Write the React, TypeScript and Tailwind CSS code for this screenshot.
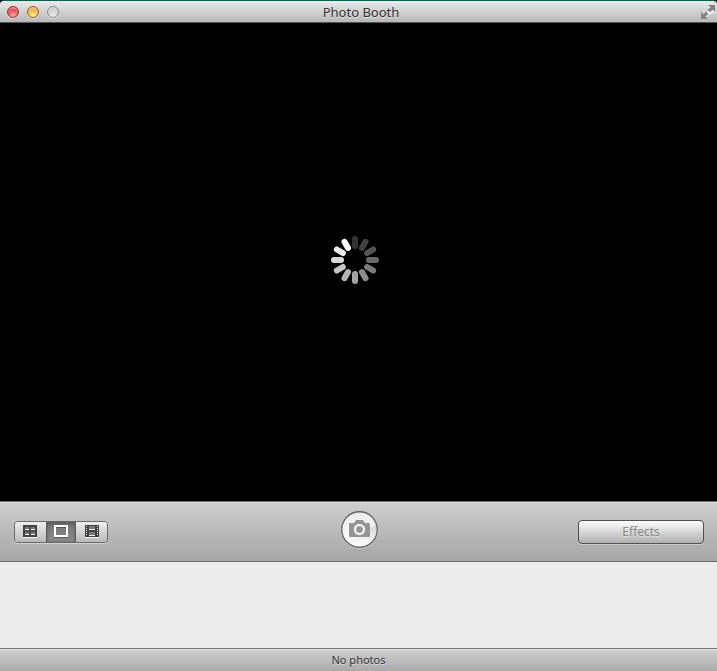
import { useState } from "react";

const spokes = [
  "#333333", "#424242", "#535353", "#686868", "#7a7a7a", "#8c8c8c",
  "#a3a3a3", "#b4b4b4", "#c6c6c6", "#d9d9d9", "#ececec", "#ffffff",
];

function Spinner() {
  return (
    <svg width="48" height="48" viewBox="-24 -24 48 48" role="img" aria-label="Loading">
      {spokes.map((color, i) => (
        <rect key={color} x="-3" y="-24" width="6" height="13" rx="3" fill={color} transform={`rotate(${i * 30})`} />
      ))}
    </svg>
  );
}

function GridIcon() {
  return (
    <svg width="14" height="13" viewBox="0 0 14 13" shapeRendering="crispEdges" aria-hidden="true">
      <path d="M0 12h14v1H0z" fill="#f4f4f4" />
      <path d="M0 0h14v12H0z" fill="#404040" />
      <path d="M2 2h4v3H2zM8 2h4v3H8zM2 7h4v3H2zM8 7h4v3H8z" fill="#777777" />
      <path d="M2 4h4v1H2zM8 4h4v1H8zM2 9h4v1H2zM8 9h4v1H8z" fill="#f0f0f0" />
      <path d="M6 2h2v8H6zM2 5h10v2H2z" fill="#4d4d4d" />
    </svg>
  );
}

function FrameIcon() {
  return (
    <svg width="14" height="13" viewBox="0 0 14 13" shapeRendering="crispEdges" aria-hidden="true">
      <path d="M0 12h14v1H0z" fill="#5c5c5c" />
      <path fillRule="evenodd" d="M0 0h14v12H0zM2 2v8h10V2z" fill="#ffffff" />
      <path d="M2 2h10v1H2z" fill="#555555" />
    </svg>
  );
}

function FilmIcon() {
  return (
    <svg width="14" height="13" viewBox="0 0 14 13" shapeRendering="crispEdges" aria-hidden="true">
      <path d="M0 12h14v1H0z" fill="#f4f4f4" />
      <path d="M0 0h14v12H0z" fill="#404040" />
      <path d="M4 1h6v4H4zM4 7h6v4H4z" fill="#777777" />
      <path d="M4 4h6v1H4zM4 10h6v1H4zM1 1h1v1H1zM1 3h1v1H1zM1 5h1v1H1zM1 7h1v1H1zM1 9h1v1H1zM12 1h1v1h-1zM12 3h1v1h-1zM12 5h1v1h-1zM12 7h1v1h-1zM12 9h1v1h-1z" fill="#f0f0f0" />
    </svg>
  );
}

function CameraIcon() {
  return (
    <svg width="37" height="37" viewBox="0 0 37 37" aria-hidden="true">
      <defs>
        <linearGradient id="face" x1="0" y1="0" x2="0" y2="1">
          <stop offset="0" stopColor="#d6d6d6" />
          <stop offset="0.5" stopColor="#dedede" />
          <stop offset="1" stopColor="#ffffff" />
        </linearGradient>
        <linearGradient id="gloss" x1="0" y1="0" x2="0" y2="1">
          <stop offset="0" stopColor="#ffffff" stopOpacity="0.5" />
          <stop offset="1" stopColor="#ffffff" stopOpacity="0.85" />
        </linearGradient>
      </defs>
      <circle cx="18.5" cy="18.5" r="17.75" fill="url(#face)" />
      <path d="M35 13A17.300 17.300 0 1 0 7 31Q14 28 21 23T35 13Z" fill="url(#gloss)" />
      <path d="M9 12h4l2-3h7l2 3h4q1 0 1 1v12q0 1-1 1H9q-1 0-1-1V13q0-1 1-1Z" fill="#959595" />
      <path d="M31 14v11q0 1-1 1H16q10-4 13-9Z" fill="#858585" opacity="0" />
      <circle cx="18.500" cy="18.500" r="4.500" fill="#919191" stroke="#eeeeee" strokeWidth="2.500" />
      <circle cx="18.500" cy="18.500" r="17.750" fill="none" stroke="#666666" strokeWidth="1.300" />
    </svg>
  );
}

function FullScreenIcon() {
  return (
    <svg width="14" height="14" viewBox="0 0 14 14" aria-hidden="true">
      <path d="M7 1h7v7l-2-2-3 3-3-3 3-3zM0 7l2 2 3-3 3 3-3 3 2 2H0z" transform="translate(0 1)" fill="#f5f5f5" />
      <path d="M7 0h7v7l-2.300-2.300L9 7.300 6.700 5l2.600-2.700zM0 7l2.300 2.300L5 6.700 7.300 9l-2.600 2.700L7 14H0z" fill="#858585" />
    </svg>
  );
}

const modes = [
  { label: "Take four quick pictures", Icon: GridIcon },
  { label: "Take a still picture", Icon: FrameIcon },
  { label: "Record a movie clip", Icon: FilmIcon },
];

const lights = [
  { label: "Close", style: "border-[#8d3835] bg-[radial-gradient(circle_at_50%_85%,#ffb0ae,#ee555a_50%,#c92d37)]" },
  { label: "Minimize", style: "border-[#9a6426] bg-[radial-gradient(circle_at_50%_85%,#fff0a0,#f8bd4e_50%,#d18b2d)]" },
  { label: "Zoom", style: "border-[#8b8b8b] bg-[radial-gradient(circle_at_50%_85%,#eeeeee,#d2d2d2_50%,#b7b7b7)]" },
];

export default function App() {
  const [mode, setMode] = useState(1);
  return (
    <main className="flex h-screen flex-col bg-black font-['Noto_Sans','Open_Sans',sans-serif]">
      <header className="grid h-[23px] shrink-0 grid-cols-[1fr_auto_1fr] items-center rounded-t-sm border-t border-b border-t-[#08614c] border-b-[#555555] bg-linear-to-b from-[#eaeaea] to-[#b8b8b8] pr-0.5 pl-[7px]">
        <div className="flex gap-2">
          {lights.map((light) => (
            <button key={light.label} aria-label={light.label} className={`size-3 rounded-full border shadow-[inset_0_2px_2px_-1px_#ffffffaa,0_1px_0_#ffffff88] ${light.style}`} />
          ))}
        </div>
        <h1 className="text-[13px] leading-5 text-[#333333] [text-shadow:0_1px_0_#ffffff88]">Photo Booth</h1>
        <button aria-label="Enter full screen" className="justify-self-end">
          <FullScreenIcon />
        </button>
      </header>

      <section aria-label="Camera preview" className="flex min-h-0 flex-1 items-center justify-center bg-black pr-2 pb-1">
        <Spinner />
      </section>

      <div className="grid h-[61px] shrink-0 grid-cols-[1fr_auto_1fr] items-center border-t border-b border-t-[#706c6e] border-b-[#686868] bg-linear-to-b from-[#cecece] to-[#a6a6a6] pr-[13px] pl-3.5 shadow-[inset_0_1px_0_#dddddd]">
        <div role="group" aria-label="Capture mode" className="flex h-[22px] w-[94px] overflow-hidden rounded-sm border border-[#6b6b6b] shadow-[0_1px_0_#d0d0d0]">
          {modes.map(({ label, Icon }, i) => (
            <button
              key={label}
              aria-label={label}
              aria-pressed={mode === i}
              onClick={() => setMode(i)}
              className={`flex flex-1 items-center justify-center ${
                mode === i
                  ? "bg-linear-to-b from-[#737373] to-[#8c8c8c] shadow-[inset_1px_0_0_#5c5c5c,inset_-1px_0_0_#5c5c5c,inset_0_1px_4px_#505050]"
                  : "bg-linear-to-b from-[#eeeeee] to-[#b9b9b9]"
              }`}
            >
              <Icon />
            </button>
          ))}
        </div>
        <button aria-label="Take photo" className="mb-1 rounded-full shadow-[0_1px_0_#c8c8c8]">
          <CameraIcon />
        </button>
        <button className="h-6 w-[126px] justify-self-end rounded-[4px] border border-[#505050] bg-linear-to-b from-white to-[#b0b0b0] text-[12px] leading-5 text-[#888888] shadow-[0_1px_0_#cccccc] [text-shadow:0_1px_0_#ffffff66]">
          Effects
        </button>
      </div>

      <section aria-label="Photos" className="h-[86px] shrink-0 bg-[#ececec]" />

      <footer className="flex h-[23px] shrink-0 items-center justify-center border-t border-[#777777] bg-linear-to-b from-[#d0d0d0] to-[#aaaaaa] text-[11px] leading-5 text-[#333333] shadow-[inset_0_1px_0_#e0e0e0] [text-shadow:0_1px_0_#ffffff88]">
        No photos
      </footer>
    </main>
  );
}
